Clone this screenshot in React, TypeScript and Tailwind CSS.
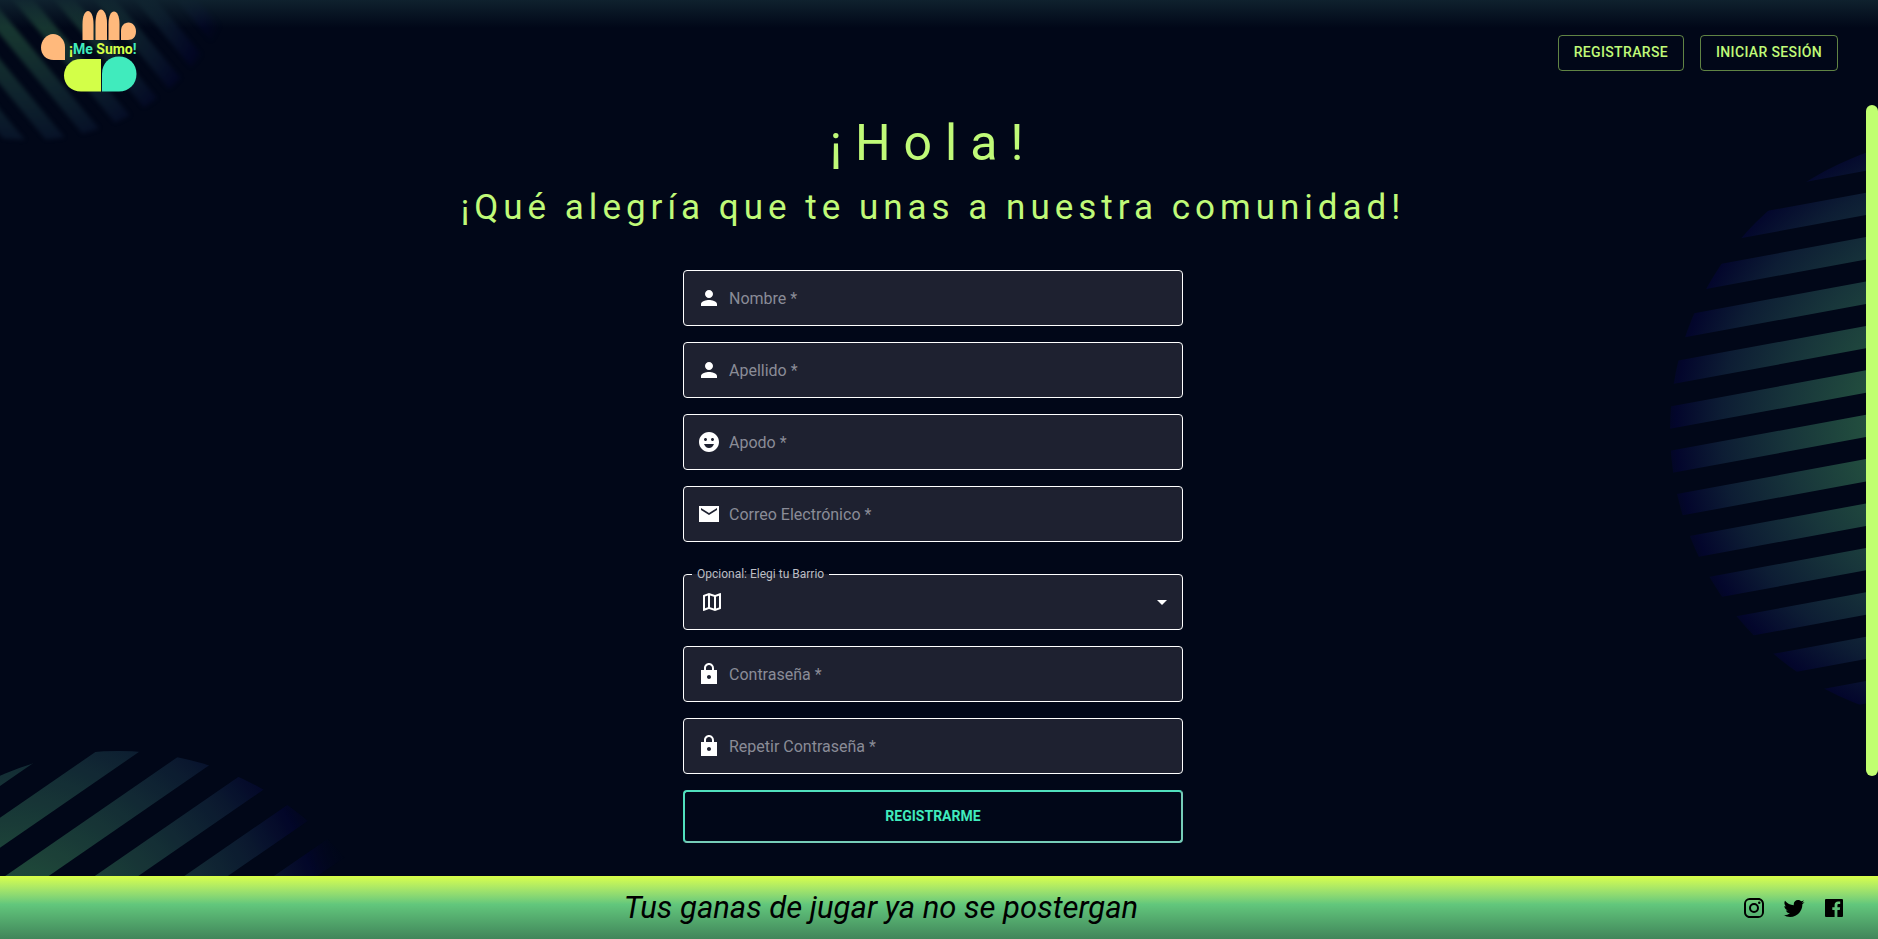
import type { ReactNode } from "react";
import { MdArrowDropDown, MdEmojiEmotions, MdOutlineMap } from "react-icons/md";

function PersonIcon() {
  return (
    <svg viewBox="0 0 24 24" className="size-6 fill-white" aria-hidden="true">
      <path d="M12 12c2.21 0 4-1.79 4-4s-1.79-4-4-4-4 1.79-4 4 1.79 4 4 4zm0 2c-2.67 0-8 1.34-8 4v2h16v-2c0-2.66-5.33-4-8-4z" />
    </svg>
  );
}

function MailIcon() {
  return (
    <svg viewBox="0 0 24 24" className="size-6 fill-white" aria-hidden="true">
      <path d="M22 4H2v16h20V4zm-2 4l-8 5-8-5V6l8 5 8-5v2z" />
    </svg>
  );
}

function LockIcon() {
  return (
    <svg viewBox="0 0 24 24" className="size-6 fill-white" aria-hidden="true">
      <path d="M20 8h-3V6.21c0-2.61-1.91-4.94-4.51-5.19C9.51.74 7 3.08 7 6v2H4v14h16V8zm-8 9c-1.1 0-2-.9-2-2s.9-2 2-2 2 .9 2 2-.9 2-2 2zM9 8V6c0-1.66 1.34-3 3-3s3 1.34 3 3v2H9z" />
    </svg>
  );
}

function InstagramIcon() {
  return (
    <svg viewBox="0 0 24 24" className="size-6 fill-black" aria-hidden="true">
      <path d="M7.8 2h8.4C19.4 2 22 4.6 22 7.8v8.4a5.8 5.8 0 0 1-5.8 5.8H7.8C4.6 22 2 19.4 2 16.2V7.8A5.8 5.8 0 0 1 7.8 2m-.2 2A3.6 3.6 0 0 0 4 7.6v8.8C4 18.39 5.61 20 7.6 20h8.8a3.6 3.6 0 0 0 3.6-3.6V7.6C20 5.61 18.39 4 16.4 4H7.6m9.65 1.5a1.25 1.25 0 1 1 0 2.5 1.25 1.25 0 0 1 0-2.5M12 7a5 5 0 1 1 0 10 5 5 0 0 1 0-10m0 2a3 3 0 1 0 0 6 3 3 0 0 0 0-6z" />
    </svg>
  );
}

function TwitterIcon() {
  return (
    <svg viewBox="0 0 24 24" className="size-6 fill-black" aria-hidden="true">
      <path d="M22.46 6c-.77.35-1.6.58-2.46.69.88-.53 1.56-1.37 1.88-2.38-.83.5-1.75.85-2.72 1.05C18.37 4.5 17.26 4 16 4c-2.35 0-4.27 1.92-4.27 4.29 0 .34.04.67.11.98C8.28 9.09 5.11 7.38 3 4.79c-.37.63-.58 1.37-.58 2.15 0 1.49.75 2.81 1.91 3.56-.71 0-1.37-.2-1.95-.5v.03c0 2.08 1.48 3.82 3.44 4.21a4.22 4.22 0 0 1-1.93.07 4.28 4.28 0 0 0 4 2.98 8.52 8.52 0 0 1-5.33 1.84q-.51 0-1.02-.06C3.44 20.29 5.7 21 8.12 21 16 21 20.33 14.46 20.33 8.79c0-.19 0-.37-.01-.56.84-.6 1.56-1.36 2.14-2.23z" />
    </svg>
  );
}

function FacebookIcon() {
  return (
    <svg viewBox="0 0 24 24" className="size-6 fill-black" aria-hidden="true">
      <path d="M20 3H4a1 1 0 0 0-1 1v16a1 1 0 0 0 1 1h8.6v-7h-2.3v-2.700h2.300V9c0-2.300 1.420-3.600 3.500-3.600.7 0 1.400.04 2.100.1V8h-1.430c-1.130 0-1.350.53-1.350 1.320v1.980h2.700l-.35 2.700h-2.370v7H20a1 1 0 0 0 1-1V4a1 1 0 0 0-1-1z" />
    </svg>
  );
}

function Logo() {
  return (
    <svg
      viewBox="0 0 100 86"
      className="h-[86px] w-[100px]"
      role="img"
      aria-label="¡Me Sumo!"
    >
      <g fill="#ffb97c">
        <path d="M42.500 31V15C42.500 7 45 2 48 2S53.500 7 53.500 15V31z" />
        <path d="M55.500 31V14C55.500 6 58 0.500 61 0.500S67 6 67 14V31z" />
        <path d="M68.500 31V15C68.500 7 71 2.500 74 2.500S79.500 7 79.500 15V31z" />
        <path d="M81 31V22C81 17 84 13.500 88.500 13.500S96 17.500 96 22.500 93 31 88 31z" />
        <path d="M25 51H13.500C6 51 1 45.500 1 38.500S6.500 25 13 25 25 31 25 38z" />
      </g>
      <path d="M61 50V82.500H41C31 82.500 24 75.500 24 66.500S31 50 41 50z" fill="#d3ff48" />
      <path d="M62 82.500V65C62 54 69 47.500 79 47.500S96.500 55 96.500 65 89 82.500 79 82.500z" fill="#40ebbd" />
      <text
        x="29"
        y="45"
        fontSize="14"
        fontWeight="700"
        className="font-[Roboto,sans-serif]"
      >
        <tspan fill="#d3ff48">¡</tspan>
        <tspan fill="#40ebbd">Me </tspan>
        <tspan fill="#d3ff48">Sumo</tspan>
        <tspan fill="#40ebbd">!</tspan>
      </text>
    </svg>
  );
}

function GradientStops() {
  return (
    <>
      <stop offset="0" stopColor="#2d6a48" />
      <stop offset="0.3" stopColor="#24523f" />
      <stop offset="0.55" stopColor="#18363b" />
      <stop offset="0.75" stopColor="#0d1d34" />
      <stop offset="0.88" stopColor="#03062c" />
      <stop offset="1" stopColor="#010718" stopOpacity="0" />
    </>
  );
}

function StripesTopLeft() {
  return (
    <svg
      viewBox="-20 -20 280 190"
      className="pointer-events-none absolute -top-5 -left-5 h-[190px] w-[280px] opacity-60 blur-[2px]"
      aria-hidden="true"
    >
      <defs>
        <radialGradient id="tl-fill" gradientUnits="userSpaceOnUse" cx="15" cy="-25" r="220">
          <GradientStops />
        </radialGradient>
        <clipPath id="tl-clip">
          <circle cx="30" cy="-74" r="214" />
        </clipPath>
      </defs>
      <g clipPath="url(#tl-clip)" stroke="url(#tl-fill)" strokeWidth="16">
        {[-78, -46, -14, 18, 50, 81, 112, 144].map((n) => (
          <line
            key={n}
            x1={n * 0.77 - 192}
            y1={n * -0.64 - 231}
            x2={n * 0.77 + 192}
            y2={n * -0.64 + 231}
          />
        ))}
      </g>
    </svg>
  );
}

function StripesRight() {
  return (
    <svg
      viewBox="1666 130 200 590"
      className="pointer-events-none absolute top-[25px] right-0 h-[590px] w-[200px]"
      aria-hidden="true"
    >
      <defs>
        <radialGradient id="r-fill" gradientUnits="userSpaceOnUse" cx="1980" cy="425" r="345">
          <GradientStops />
        </radialGradient>
        <clipPath id="r-clip">
          <circle cx="1964" cy="430" r="294" />
        </clipPath>
      </defs>
      <g clipPath="url(#r-clip)" fill="url(#r-fill)">
        {Array.from({ length: 13 }, (_, i) => {
          const y = 148.3 + i * 44.4;
          return (
            <polygon
              key={i}
              points={`1866,${y} 1866,${y + 22.4} 1660,${y + 60.4} 1660,${y + 38}`}
            />
          );
        })}
      </g>
    </svg>
  );
}

function StripesBottomLeft() {
  return (
    <svg
      viewBox="0 736 360 140"
      className="pointer-events-none absolute bottom-0 left-0 h-[140px] w-[360px] opacity-85"
      aria-hidden="true"
    >
      <defs>
        <radialGradient id="bl-fill" gradientUnits="userSpaceOnUse" cx="0" cy="980" r="375">
          <GradientStops />
        </radialGradient>
        <clipPath id="bl-clip">
          <circle cx="118" cy="1044" r="293" />
        </clipPath>
      </defs>
      <g clipPath="url(#bl-clip)" fill="url(#bl-fill)">
        {Array.from({ length: 6 }, (_, i) => {
          const y = 756 + i * 61.8;
          return (
            <polygon
              key={i}
              points={`0,${y} 0,${y + 30} 400,${y - 246} 400,${y - 276}`}
            />
          );
        })}
      </g>
    </svg>
  );
}

interface FieldProps {
  id: string;
  label: string;
  type?: string;
  icon: ReactNode;
}

function Field({ id, label, type = "text", icon }: FieldProps) {
  return (
    <div className="flex h-14 items-center gap-2 rounded border border-white bg-[#1e2130] px-[13px] focus-within:border-[#c0ff70]">
      {icon}
      <div className="grid h-full min-w-0 flex-1 items-center">
        <input
          id={id}
          type={type}
          required
          placeholder=" "
          className="peer col-start-1 row-start-1 h-full w-full bg-transparent text-base text-white outline-none"
        />
        <label
          htmlFor={id}
          className="pointer-events-none invisible col-start-1 row-start-1 pt-0.5 text-base text-[#8a8c97] peer-placeholder-shown:visible"
        >
          {label} *
        </label>
      </div>
    </div>
  );
}

export default function App() {
  return (
    <div className="relative flex min-h-screen flex-col bg-[#010718] font-[Roboto,sans-serif]">
      <StripesTopLeft />
      <header className="relative flex h-[105px] items-start justify-between px-10">
        <div className="absolute inset-x-0 top-0 h-7 bg-linear-to-b from-[#102430] to-transparent opacity-90" />
        <a href="#inicio" className="relative mt-[9px]">
          <Logo />
        </a>
        <nav className="relative mt-[35px] flex gap-4">
          <button
            type="button"
            className="h-9 rounded border border-[#c0ff7080] px-[15px] pb-0.5 text-sm font-medium tracking-wide text-[#c0fa78] uppercase"
          >
            Registrarse
          </button>
          <button
            type="button"
            className="h-9 rounded border border-[#c0ff7080] px-[15px] pb-0.5 text-sm font-medium tracking-wide text-[#c0fa78] uppercase"
          >
            Iniciar Sesión
          </button>
        </nav>
      </header>

      <div className="flex flex-1">
        <main className="relative flex-1 px-6 pt-2 pb-8">
          <StripesRight />
          <StripesBottomLeft />
          <div className="relative text-center text-[#c0fa78]">
            <h1 className="text-[50px] leading-[60px] tracking-[13px]">¡Hola!</h1>
            <h2 className="mt-[13px] text-[35px] leading-[44px] tracking-[5px]">
              ¡Qué alegría que te unas a nuestra comunidad!
            </h2>
          </div>
          <form className="relative mx-auto mt-10 flex max-w-[500px] flex-col gap-4">
            <Field id="nombre" label="Nombre" icon={<PersonIcon />} />
            <Field id="apellido" label="Apellido" icon={<PersonIcon />} />
            <Field
              id="apodo"
              label="Apodo"
              icon={<MdEmojiEmotions className="size-6 text-white" />}
            />
            <Field id="correo" label="Correo Electrónico" type="email" icon={<MailIcon />} />
            <fieldset className="mt-2 min-w-0 rounded border border-white bg-[#1e2130] px-2 pb-[7px]">
              <legend className="px-[5px] text-xs leading-4 text-[#bcbdc3]">
                <label htmlFor="barrio">Opcional: Elegi tu Barrio</label>
              </legend>
              <div className="flex h-10 items-center pl-2">
                <MdOutlineMap className="size-6 text-white" />
                <select
                  id="barrio"
                  defaultValue=""
                  className="h-full min-w-0 flex-1 appearance-none bg-transparent px-2 text-base text-white outline-none"
                >
                  <option value=""></option>
                </select>
                <MdArrowDropDown className="pointer-events-none -ml-6 size-6 text-white" />
              </div>
            </fieldset>
            <Field id="clave" label="Contraseña" type="password" icon={<LockIcon />} />
            <Field id="clave2" label="Repetir Contraseña" type="password" icon={<LockIcon />} />
            <button
              type="submit"
              className="h-[53px] rounded border-2 border-t-[#50dfbd] border-r-[#76cdb8] border-b-[#76cdb8] border-l-[#50dfbd] pb-0.5 text-sm font-bold text-[#40ebbd] uppercase"
            >
              Registrarme
            </button>
          </form>
        </main>
        <div className="w-3 shrink-0">
          <div className="h-[87%] rounded-full bg-[#c0ff70]" />
        </div>
      </div>

      <footer className="flex h-[63px] items-center bg-linear-to-b from-[#d9ff48] via-[#62c77c] via-45% to-[#41855a] px-6">
        <p className="flex-1 pl-9 text-center text-[31px] leading-10 text-black italic">
          Tus ganas de jugar ya no se postergan
        </p>
        <div className="ml-8 flex">
          <a href="#instagram" aria-label="Instagram" className="p-2">
            <InstagramIcon />
          </a>
          <a href="#twitter" aria-label="Twitter" className="p-2">
            <TwitterIcon />
          </a>
          <a href="#facebook" aria-label="Facebook" className="p-2">
            <FacebookIcon />
          </a>
        </div>
      </footer>
    </div>
  );
}
